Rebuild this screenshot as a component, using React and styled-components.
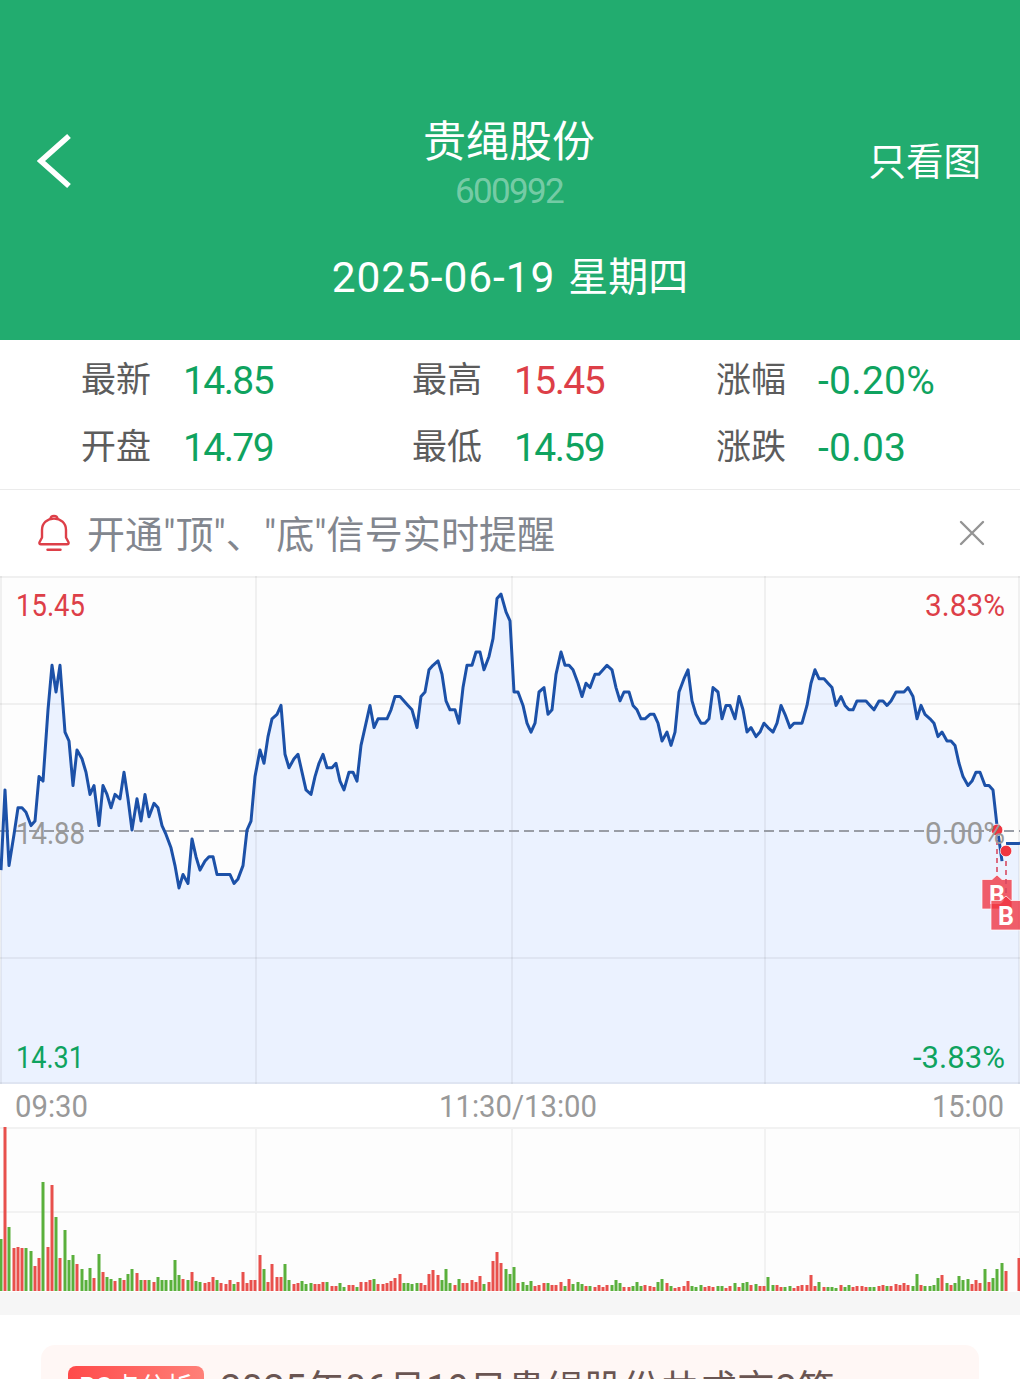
import React from "react";
import styled, { createGlobalStyle } from "styled-components";

const GREEN = "#0fa35f";
const RED = "#dd3f48";

const quotes = [
  { label: "最新", value: "14.85", color: GREEN },
  { label: "最高", value: "15.45", color: RED },
  { label: "涨幅", value: "-0.20%", color: GREEN, wide: true },
  { label: "开盘", value: "14.79", color: GREEN },
  { label: "最低", value: "14.59", color: GREEN },
  { label: "涨跌", value: "-0.03", color: GREEN, wide: true },
];

// one entry per minute, in cents above or below the previous close (14.88)
const ticks = [
  -9, 9, -8, -1, 5, 5, 4, 1, 2, 12, 11, 27, 37, 31, 37, 22, 20, 10, 18, 16,
  13, 8, 10, 1, 10, 8, 5, 8, 7, 13, 7, 0, 7, 2, 8, 3, 6, 5, 1, -1,
  -4, -8, -13, -10, -12, -2, -6, -9, -7, -6, -6, -10, -10, -10, -10, -12, -11, -8, 0, 2,
  12, 18, 15, 21, 25, 26, 28, 17, 14, 16, 17, 13, 9, 8, 12, 15, 17, 14, 14, 15,
  11, 9, 13, 13, 11, 19, 24, 28, 23, 25, 25, 25, 27, 30, 30, 29, 28, 27, 23, 30,
  31, 36, 37, 38, 35, 29, 27, 27, 24, 32, 37, 37, 40, 40, 36, 39, 43, 52, 53, 49,
  47, 31, 31, 28, 24, 22, 24, 31, 32, 26, 27, 35, 40, 37, 37, 36, 33, 30, 33, 32,
  35, 35, 36, 37, 36, 32, 29, 31, 31, 28, 27, 25, 25, 26, 26, 24, 20, 22, 19, 22,
  31, 34, 36, 29, 26, 24, 24, 25, 32, 31, 25, 28, 28, 25, 30, 27, 22, 23, 21, 22,
  24, 23, 22, 24, 28, 26, 23, 24, 24, 24, 28, 33, 36, 34, 34, 33, 32, 28, 30, 28,
  27, 27, 29, 29, 29, 28, 27, 29, 29, 28, 29, 31, 31, 31, 32, 30, 25, 28, 26, 25,
  24, 21, 22, 20, 20, 19, 15, 12, 10, 11, 13, 13, 10, 10, 9, 1, -7, -3, -3, -3, -3,
];

// volume per minute, r = up, g = down
const volumes = `
g52 r164 g64 r43 r44 r43 g43 g40 r25 r33 g109 r44 r106 g74 r33 g61 g31 g36 r27 g22
g11 g23 r13 g37 r19 g14 g12 r10 g13 r11 g17 g22 r18 g11 r11 g11 r9 g14 g11 g11
g11 g31 g16 r12 g11 r19 g10 g9 r8 r9 r14 g11 r8 r7 r11 g7 r9 r19 r8 r11
r11 r36 g22 r9 r27 r14 r14 g27 g11 r7 r8 g10 g7 g8 r7 r7 r9 g9 r5 r5
g8 g4 r6 r6 g4 r9 r9 r11 g12 r7 r7 r8 r10 r13 r17 g8 g8 g7 g8 r8
r6 r17 r21 r16 g11 g22 g8 r6 g12 r8 r8 r11 r9 r15 g7 r9 r30 r39 r28 g22
g17 g24 r8 g9 g6 g10 r5 r6 r8 g8 r6 r6 r9 g5 r12 g7 g9 g7 r5 g5
r4 r6 r4 r6 g6 g11 g8 r4 r4 g5 g9 g5 r6 r5 r4 g9 g12 r8 g5 r3
r4 r5 r10 g5 g4 g6 r4 r5 r4 g5 g5 r3 r5 g8 r4 g8 g9 r6 g7 r5
r5 g14 g6 r6 r4 g4 g5 r3 r5 r6 r6 r16 r5 g9 r4 g4 g4 g3 r6 g4
g6 r4 r5 r5 r4 g4 g4 r5 r6 g5 r5 r7 r6 r8 r6 g5 g17 r6 g5 g5
g6 g13 r16 g8 r6 g8 g15 g11 g12 r7 r11 r8 g22 r9 g13 g22 g28 r20 r0 r0 r33
`
  .trim()
  .split(/\s+/)
  .map((v) => ({ up: v[0] === "r", size: Number(v.slice(1)) }));

const minuteX = (i) => Math.round(1 + i * 4.24);
const priceY = (t) => 254 - t * 4.45;

const linePoints = ticks.map((t, i) => `${minuteX(i)},${priceY(t).toFixed(1)}`);
// the closing stretch is drawn apart from the rest of the session
const session = linePoints.slice(0, 237);
const closing = [...linePoints.slice(237), `1020,${priceY(-3)}`];
const columns = [256, 512, 765];

const Marker = ({ x, y, tip }) => (
  <g>
    <line x1={x} x2={x} y1={y + 10} y2={tip} stroke="#d84a62" strokeWidth="1.6" strokeDasharray="5 4" />
    <circle cx={x} cy={y} r="5.8" fill="#f03540" stroke="#fff" strokeOpacity="0.7" />
    <path
      d={`M${x - 15} ${tip + 4.5}H${x - 5}L${x} ${tip}L${x + 5} ${tip + 4.5}H${x + 15}V${tip + 34}H${x - 15}Z`}
      fill="#f03340"
      fillOpacity="0.78"
      stroke="#fff"
      strokeOpacity="0.7"
      strokeWidth="1"
    />
    <MarkerText x={x} y={tip + 28.5}>B</MarkerText>
  </g>
);

const PriceChart = () => (
  <PriceSvg viewBox="0 0 1020 509">
    <rect y="0" width="1020" height="508" fill="#fdfdfd" />
    <polygon points={`0,508 ${linePoints.join(" ")} 1020,508`} fill="#ebf2ff" />
    <g stroke="#000" strokeOpacity="0.05" strokeWidth="2">
      {[1, 128, 382, 507].map((y) => (
        <line key={y} x1="0" x2="1020" y1={y} y2={y} />
      ))}
      {[1, ...columns, 1019].map((x) => (
        <line key={x} x1={x} x2={x} y1="0" y2="508" />
      ))}
    </g>
    <line x1="-1" x2="1020" y1="255" y2="255" stroke="#999da6" strokeWidth="2" strokeDasharray="10 5" />
    <g fill="none" stroke="#1c51a8" strokeWidth="3" strokeLinejoin="round">
      <polyline points={session.join(" ")} />
      <polyline points={closing.join(" ")} />
    </g>
    <Marker x={997} y={254} tip={299} />
    <Marker x={1006} y={275} tip={320} />
    <AxisText x="16" y="40" textLength="69" fill={RED}>15.45</AxisText>
    <AxisText x="16" y="268" textLength="69" fill="#999">14.88</AxisText>
    <AxisText x="16" y="492" textLength="68" fill={GREEN}>14.31</AxisText>
    <AxisText x="925" y="40" textLength="80" fill={RED}>3.83%</AxisText>
    <AxisText x="925" y="268" textLength="80" fill="#999">0.00%</AxisText>
    <AxisText x="913" y="492" textLength="92" fill={GREEN}>-3.83%</AxisText>
  </PriceSvg>
);

const VolumeChart = () => (
  <VolumeSvg viewBox="0 0 1020 165">
    <rect width="1020" height="165" fill="#fdfdfd" />
    <g stroke="#f2f2f2" strokeWidth="2">
      <line x1="0" x2="1020" y1="1" y2="1" />
      <line x1="0" x2="1020" y1="85" y2="85" />
      {[...columns, 1020].map((x) => (
        <line key={x} x1={x} x2={x} y1="0" y2="165" />
      ))}
    </g>
    {volumes.map((v, i) => (
      <rect
        key={i}
        x={minuteX(i) - 1.5}
        y={164 - v.size}
        width="3"
        height={v.size}
        fill={v.up ? "#e8504c" : "#5ab03c"}
      />
    ))}
  </VolumeSvg>
);

const App = () => {
  return (
    <>
      <GlobalStyle />
      <Page>
        <Header>
          <TitleBar>
            <BackIcon viewBox="0 0 34 56">
              <path d="M32 3L4 28L32 53" fill="none" stroke="#fff" strokeWidth="5.6" />
            </BackIcon>
            <Heading>
              <StockName>贵绳股份</StockName>
              <StockCode>600992</StockCode>
            </Heading>
            <ChartOnly>只看图</ChartOnly>
          </TitleBar>
          <TradeDate>
            <DateDigits>2025-06-19</DateDigits>
            <span>星期四</span>
          </TradeDate>
        </Header>

        <Quotes>
          {quotes.map((q) => (
            <Quote key={q.label}>
              <QuoteLabel>{q.label}</QuoteLabel>
              <QuoteValue $color={q.color} $wide={q.wide}>{q.value}</QuoteValue>
            </Quote>
          ))}
        </Quotes>

        <Notice>
          <BellIcon viewBox="0 0 32 38">
            <g fill="none" stroke={RED} strokeWidth="2.4" strokeLinecap="round" strokeLinejoin="round">
              <path d="M12.5 4.6C12.8 0.9 19.2 0.9 19.5 4.6" />
              <path d="M4 16C4 9 9.3 4.6 16 4.6S28 9 28 16V23.5L30.5 28.2Q31 30.3 29 30.3H3Q1 30.3 1.5 28.2L4 23.5Z" />
              <path d="M9.5 35.7H22.5" />
            </g>
          </BellIcon>
          <NoticeText>开通"顶"、"底"信号实时提醒</NoticeText>
          <CloseIcon viewBox="0 0 26 26">
            <path d="M2 2L24 24M24 2L2 24" stroke="#949494" strokeWidth="2.4" strokeLinecap="round" />
          </CloseIcon>
        </Notice>

        <PriceChart />
        <TimeAxis viewBox="0 0 1020 42">
          <AxisText x="15" y="32" textLength="73" fill="#999">09:30</AxisText>
          <AxisText x="439" y="32" textLength="158" fill="#999">11:30/13:00</AxisText>
          <AxisText x="932" y="32" textLength="72" fill="#999">15:00</AxisText>
        </TimeAxis>
        <VolumeChart />

        <Divider />
        <Card>
          <Tag>BS点分析</Tag>
          <CardText>2025年06月19日贵绳股份共成交2笔</CardText>
        </Card>
      </Page>
    </>
  );
};

export default App;

const GlobalStyle = createGlobalStyle`
  body {
    margin: 0;
    background: #fff;
  }
`;

const Page = styled.div`
  display: flex;
  flex-direction: column;
  width: 1020px;
  height: 1379px;
  overflow: hidden;
  background: #fff;
  font-family: Roboto, "Noto Sans CJK SC", sans-serif;
`;

const Header = styled.header`
  display: flex;
  flex-direction: column;
  flex: none;
  box-sizing: border-box;
  height: 340px;
  padding-top: 110px;
  color: #fff;
  background: #22ac6f;
`;

const TitleBar = styled.div`
  display: grid;
  grid-template-columns: 1fr auto 1fr;
  align-items: center;
  height: 102px;
  padding: 0 39px 0 37px;
`;

const BackIcon = styled.svg`
  width: 34px;
  height: 56px;
`;

const Heading = styled.div`
  display: flex;
  flex-direction: column;
  align-items: center;
  padding-top: 2px;
`;

const StockName = styled.div`
  font-size: 43px;
  line-height: 60px;
`;

const StockCode = styled.div`
  font-size: 35px;
  line-height: 40px;
  letter-spacing: -1.7px;
  color: rgba(255, 255, 255, 0.4);
`;

const ChartOnly = styled.div`
  justify-self: end;
  padding-top: 2px;
  font-size: 37.5px;
  line-height: 52px;
`;

const TradeDate = styled.div`
  display: flex;
  justify-content: center;
  gap: 13px;
  margin-top: 38px;
  font-size: 40px;
  line-height: 56px;
`;

const DateDigits = styled.span`
  font-size: 42.5px;
  letter-spacing: 0.9px;
`;

const Quotes = styled.section`
  display: grid;
  grid-template-columns: 331px 304px 1fr;
  grid-auto-rows: 67px;
  flex: none;
  box-sizing: border-box;
  height: 150px;
  padding: 7px 0 0 81px;
  border-bottom: 1px solid #ebebeb;
`;

const Quote = styled.div`
  display: flex;
  align-items: center;
  gap: 32px;
`;

const QuoteLabel = styled.span`
  font-size: 35px;
  line-height: 50px;
  color: #5c5c5c;
`;

const QuoteValue = styled.span`
  font-size: 39px;
  line-height: 50px;
  letter-spacing: ${(props) => (props.$wide ? "0.3px" : "-1.6px")};
  color: ${(props) => props.$color};
`;

const Notice = styled.section`
  display: flex;
  align-items: center;
  flex: none;
  box-sizing: border-box;
  height: 86px;
  padding: 0 35px 0 38px;
`;

const BellIcon = styled.svg`
  width: 32px;
  height: 38px;
  margin-right: 17px;
`;

const NoticeText = styled.span`
  flex: 1;
  padding-top: 4px;
  font-size: 38px;
  line-height: 54px;
  letter-spacing: 0.1px;
  color: #82868e;
`;

const CloseIcon = styled.svg`
  width: 26px;
  height: 26px;
`;

const PriceSvg = styled.svg`
  flex: none;
  width: 1020px;
  height: 509px;
`;

const TimeAxis = styled.svg`
  flex: none;
  width: 1020px;
  height: 42px;
`;

const VolumeSvg = styled.svg`
  flex: none;
  width: 1020px;
  height: 165px;
`;

const AxisText = styled.text.attrs({ lengthAdjust: "spacingAndGlyphs" })`
  font-family: Roboto, sans-serif;
  font-size: 30.5px;
`;

const MarkerText = styled.text`
  font-family: Roboto, sans-serif;
  font-size: 25px;
  font-weight: 700;
  text-anchor: middle;
  fill: #fff;
`;

const Divider = styled.div`
  flex: none;
  height: 23px;
  background: #f6f6f6;
`;

const Card = styled.section`
  display: flex;
  align-items: flex-start;
  flex: none;
  gap: 16px;
  box-sizing: border-box;
  height: 120px;
  margin: 30px 41px 0;
  padding: 21px 27px;
  border-radius: 14px;
  background: #fff7f5;
`;

const Tag = styled.span`
  width: 136px;
  height: 42px;
  border-radius: 8px;
  font-size: 27px;
  line-height: 45px;
  text-align: center;
  color: #fff;
  background: linear-gradient(90deg, #ff4a4a, #ff8078);
`;

const CardText = styled.span`
  font-size: 38px;
  line-height: 46px;
  letter-spacing: 0.25px;
  color: #6a5552;
`;
